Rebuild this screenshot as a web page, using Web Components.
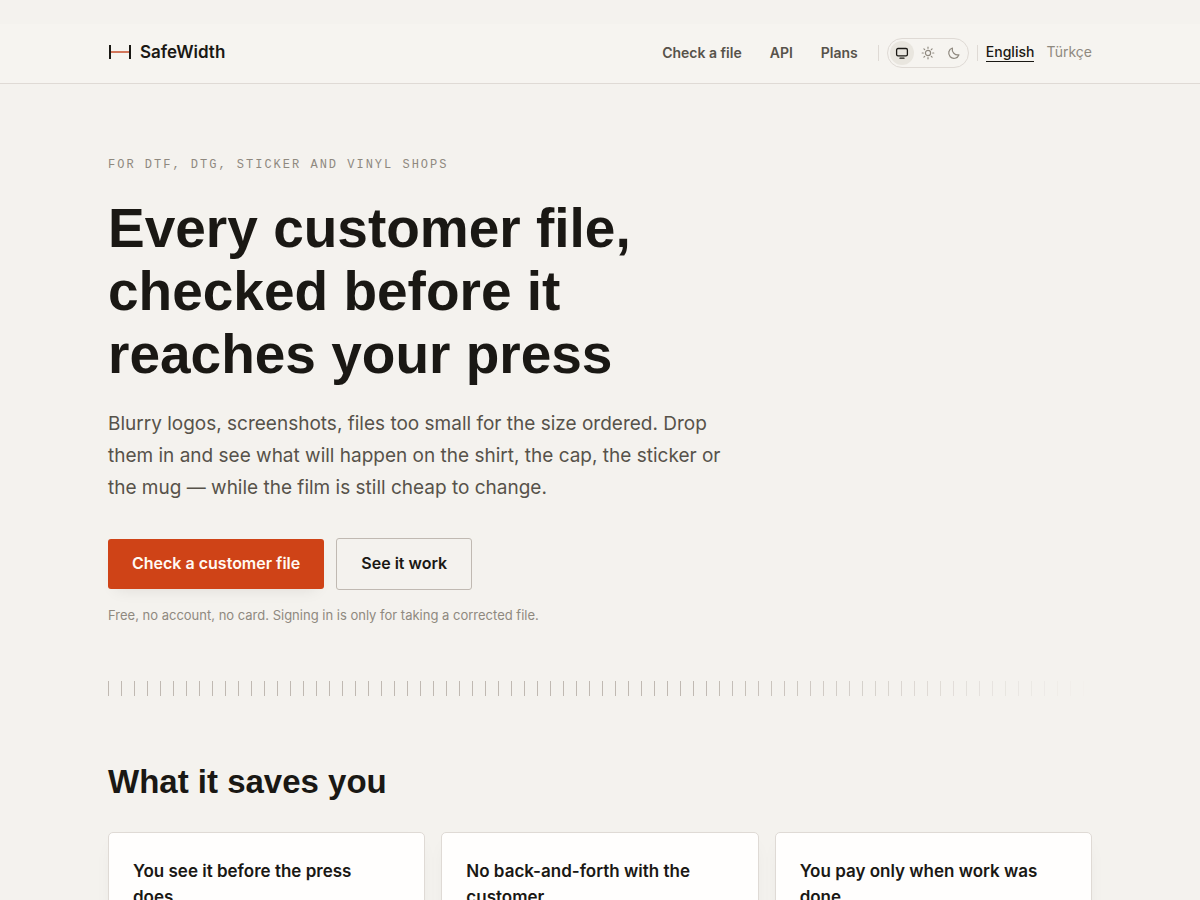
<!DOCTYPE html>
<html lang="en">
<head>
<meta charset="utf-8">
<meta name="viewport" content="width=device-width, initial-scale=1">
<title>SafeWidth</title>
<style>
    :root {
        --paper: #f4f2ee;
        --bar: #f6f4f0;
        --card: #fffefd;
        --ink: #1a1814;
        --soft: #57524a;
        --mute: #8f897f;
        --line: #dfdad5;
        --line-strong: #c0b9b2;
        --accent: #cf4317;
        --display: "Liberation Sans", Arial, sans-serif;
        --text: Inter, "Liberation Sans", sans-serif;
        --mono: "Liberation Mono", monospace;
    }
    body {
        margin: 0;
        padding-top: 24px;
        background: var(--paper);
        color: var(--ink);
        font-family: var(--text);
    }
</style>
</head>
<body>
<site-header>
    <site-brand slot="brand">SafeWidth</site-brand>
    <nav-link href="#check">Check a file</nav-link>
    <nav-link href="#api">API</nav-link>
    <nav-link href="#plans">Plans</nav-link>
    <theme-switch slot="tools"></theme-switch>
    <language-link slot="languages" href="#en" lang="en" current>English</language-link>
    <language-link slot="languages" href="#tr" lang="tr">Türkçe</language-link>
</site-header>

<main>
    <hero-section>
        <span slot="eyebrow">For DTF, DTG, sticker and vinyl shops</span>
        <span slot="title">Every customer file, checked before it reaches your press</span>
        <span slot="lead">Blurry logos, screenshots, files too small for the size ordered. Drop them in and see what will happen on the shirt, the cap, the sticker or the mug — while the film is still cheap to change.</span>
        <action-link slot="actions" href="#check" primary>Check a customer file</action-link>
        <action-link slot="actions" href="#demo">See it work</action-link>
        <span slot="note">Free, no account, no card. Signing in is only for taking a corrected file.</span>
    </hero-section>
    <ruler-divider></ruler-divider>
    <benefit-section>
        <span slot="title">What it saves you</span>
        <benefit-card>You see it before the press does</benefit-card>
        <benefit-card>No back-and-forth with the customer</benefit-card>
        <benefit-card>You pay only when work was done</benefit-card>
    </benefit-section>
</main>

<script>
class SiteHeader extends HTMLElement {
    constructor() {
        super();
        this.attachShadow({ mode: 'open' });
        this.shadowRoot.innerHTML = `
            <style>
                :host {
                    display: block;
                    background: var(--bar);
                    border-bottom: 1px solid var(--line);
                }
                header {
                    display: flex;
                    align-items: center;
                    justify-content: space-between;
                    box-sizing: border-box;
                    width: min(100% - 48px, 984px);
                    min-height: 59px;
                    margin: 0 auto;
                    padding-bottom: 2px;
                }
                .right, nav, .languages {
                    display: flex;
                    align-items: center;
                }
                .right {
                    gap: 8px;
                }
                nav {
                    gap: 28px;
                    margin-right: 12px;
                }
                .languages {
                    gap: 12px;
                }
                .rule {
                    width: 1px;
                    height: 16px;
                    background: var(--line);
                }
            </style>
            <header>
                <slot name="brand"></slot>
                <div class="right">
                    <nav aria-label="Main"><slot></slot></nav>
                    <span class="rule"></span>
                    <slot name="tools"></slot>
                    <span class="rule"></span>
                    <div class="languages"><slot name="languages"></slot></div>
                </div>
            </header>
        `;
    }
}

class SiteBrand extends HTMLElement {
    constructor() {
        super();
        this.attachShadow({ mode: 'open' });
        this.shadowRoot.innerHTML = `
            <style>
                :host {
                    display: block;
                }
                a {
                    display: flex;
                    align-items: center;
                    gap: 9px;
                    padding-bottom: 2px;
                    color: var(--ink);
                    font: 600 17px/24px var(--text);
                    text-decoration: none;
                }
            </style>
            <a href="#home">
                <svg width="23" height="14" viewBox="0 0 23 14" aria-hidden="true">
                    <path d="M2 7h19" stroke="#d2765b" stroke-width="2"/>
                    <path d="M2 0v14M22 0v14" stroke="#1a1814" stroke-width="2"/>
                </svg>
                <slot></slot>
            </a>
        `;
    }
}

class NavLink extends HTMLElement {
    constructor() {
        super();
        this.attachShadow({ mode: 'open' });
        this.shadowRoot.innerHTML = `
            <style>
                :host {
                    display: block;
                }
                a {
                    display: block;
                    color: var(--soft);
                    font: 600 14px/20px var(--text);
                    text-decoration: none;
                    white-space: nowrap;
                }
            </style>
            <a><slot></slot></a>
        `;
    }

    connectedCallback() {
        this.shadowRoot.querySelector('a').href = this.getAttribute('href') || '#';
    }
}

class LanguageLink extends HTMLElement {
    constructor() {
        super();
        this.attachShadow({ mode: 'open' });
        this.shadowRoot.innerHTML = `
            <style>
                :host {
                    display: block;
                }
                a {
                    display: block;
                    border-bottom: 1px solid transparent;
                    color: var(--mute);
                    font: 400 14px/18px var(--text);
                    text-decoration: none;
                }
                :host([current]) a {
                    border-color: var(--ink);
                    color: var(--ink);
                    font-weight: 500;
                }
            </style>
            <a><slot></slot></a>
        `;
    }

    connectedCallback() {
        const link = this.shadowRoot.querySelector('a');
        link.href = this.getAttribute('href') || '#';
        if (this.hasAttribute('current')) {
            link.setAttribute('aria-current', 'true');
        }
    }
}

class ThemeSwitch extends HTMLElement {
    constructor() {
        super();
        this.attachShadow({ mode: 'open' });
        this.shadowRoot.innerHTML = `
            <style>
                :host {
                    display: flex;
                    gap: 2px;
                    padding: 2px;
                    border: 1px solid var(--line);
                    border-radius: 15px;
                }
                button {
                    display: grid;
                    place-items: center;
                    width: 24px;
                    height: 24px;
                    padding: 0;
                    border: 0;
                    border-radius: 50%;
                    background: none;
                    color: var(--mute);
                    cursor: pointer;
                }
                button[aria-pressed="true"] {
                    background: #e9e6df;
                    color: var(--ink);
                }
                svg {
                    width: 14px;
                    height: 14px;
                    fill: none;
                    stroke: currentColor;
                    stroke-linecap: round;
                    stroke-linejoin: round;
                }
            </style>
            <button type="button" aria-label="System theme" aria-pressed="true">
                <svg viewBox="0 0 14 14" stroke-width="1.3"><rect x="1.6" y="2.5" width="10.8" height="7.4" rx="1.4"/><path d="M5 12.2h4"/></svg>
            </button>
            <button type="button" aria-label="Light theme" aria-pressed="false">
                <svg viewBox="0 0 14 14" stroke-width="1.2"><circle cx="7" cy="7" r="2.6"/><path d="M7 1.2v1.1M7 11.7v1.1M1.2 7h1.1M11.7 7h1.1M2.9 2.9l.8.8M10.3 10.3l.8.8M2.9 11.1l.8-.8M10.3 3.7l.8-.8"/></svg>
            </button>
            <button type="button" aria-label="Dark theme" aria-pressed="false">
                <svg viewBox="0 0 14 14" stroke-width="1.2"><path d="M12 8.8A5.3 5.3 0 1 1 5.4 2a5.6 5.6 0 0 0 6.6 6.8z"/></svg>
            </button>
        `;
    }

    connectedCallback() {
        const buttons = this.shadowRoot.querySelectorAll('button');
        buttons.forEach((button) => {
            button.addEventListener('click', () => {
                buttons.forEach((other) => other.setAttribute('aria-pressed', String(other === button)));
            });
        });
    }
}

class HeroSection extends HTMLElement {
    constructor() {
        super();
        this.attachShadow({ mode: 'open' });
        this.shadowRoot.innerHTML = `
            <style>
                :host {
                    display: block;
                    width: min(100% - 48px, 984px);
                    margin: 0 auto;
                    padding: 73px 0 56px;
                }
                p, h1 {
                    margin: 0;
                }
                .eyebrow {
                    color: var(--mute);
                    font: 400 12px/16px var(--mono);
                    letter-spacing: 2px;
                    text-transform: uppercase;
                }
                h1 {
                    max-width: 580px;
                    margin-top: 24px;
                    font: 700 55px/63px var(--display);
                }
                .lead {
                    max-width: 624px;
                    margin-top: 22px;
                    color: var(--soft);
                    font: 400 19px/32px var(--text);
                }
                .actions {
                    display: flex;
                    flex-wrap: wrap;
                    align-items: center;
                    gap: 12px;
                    margin-top: 34px;
                }
                .note {
                    margin-top: 15px;
                    color: var(--mute);
                    font: 400 13px/20px var(--text);
                }
            </style>
            <section>
                <p class="eyebrow"><slot name="eyebrow"></slot></p>
                <h1><slot name="title"></slot></h1>
                <p class="lead"><slot name="lead"></slot></p>
                <div class="actions"><slot name="actions"></slot></div>
                <p class="note"><slot name="note"></slot></p>
            </section>
        `;
    }
}

class ActionLink extends HTMLElement {
    constructor() {
        super();
        this.attachShadow({ mode: 'open' });
        this.shadowRoot.innerHTML = `
            <style>
                :host {
                    display: block;
                }
                a {
                    display: block;
                    padding: 12px 24px 14px;
                    border: 1px solid var(--line-strong);
                    border-radius: 3px;
                    color: var(--ink);
                    font: 600 16px/24px var(--text);
                    text-decoration: none;
                }
                :host([primary]) a {
                    border: 0;
                    background: var(--accent);
                    box-shadow: 0 8px 16px -8px rgba(26, 24, 20, 0.1);
                    color: #fffaf3;
                }
            </style>
            <a><slot></slot></a>
        `;
    }

    connectedCallback() {
        this.shadowRoot.querySelector('a').href = this.getAttribute('href') || '#';
    }
}

class RulerDivider extends HTMLElement {
    constructor() {
        super();
        this.attachShadow({ mode: 'open' });
        this.shadowRoot.innerHTML = `
            <style>
                :host {
                    display: block;
                    width: min(100% - 48px, 984px);
                    height: 15px;
                    margin: 0 auto;
                    background: repeating-linear-gradient(90deg, var(--line-strong) 0 1px, transparent 1px 13px);
                    -webkit-mask-image: linear-gradient(90deg, #000 60%, transparent);
                    mask-image: linear-gradient(90deg, #000 60%, transparent);
                }
            </style>
        `;
    }
}

class BenefitSection extends HTMLElement {
    constructor() {
        super();
        this.attachShadow({ mode: 'open' });
        this.shadowRoot.innerHTML = `
            <style>
                :host {
                    display: block;
                    width: min(100% - 48px, 984px);
                    margin: 0 auto;
                    padding: 64px 0;
                }
                h2 {
                    margin: 0 0 28px;
                    font: 700 33px/44px var(--display);
                }
                .cards {
                    display: grid;
                    grid-template-columns: repeat(auto-fit, minmax(260px, 1fr));
                    gap: 16px;
                }
            </style>
            <section>
                <h2><slot name="title"></slot></h2>
                <div class="cards"><slot></slot></div>
            </section>
        `;
    }
}

class BenefitCard extends HTMLElement {
    constructor() {
        super();
        this.attachShadow({ mode: 'open' });
        this.shadowRoot.innerHTML = `
            <style>
                :host {
                    display: block;
                    padding: 25px 24px 24px;
                    border: 1px solid var(--line);
                    border-radius: 5px;
                    background: var(--card);
                    box-shadow: 0 8px 20px -8px rgba(26, 24, 20, 0.08);
                }
                h3 {
                    max-width: 256px;
                    margin: 0;
                    font: 600 17px/26px var(--text);
                }
            </style>
            <h3><slot></slot></h3>
        `;
    }
}

customElements.define('site-header', SiteHeader);
customElements.define('site-brand', SiteBrand);
customElements.define('nav-link', NavLink);
customElements.define('language-link', LanguageLink);
customElements.define('theme-switch', ThemeSwitch);
customElements.define('hero-section', HeroSection);
customElements.define('action-link', ActionLink);
customElements.define('ruler-divider', RulerDivider);
customElements.define('benefit-section', BenefitSection);
customElements.define('benefit-card', BenefitCard);
</script>
</body>
</html>
